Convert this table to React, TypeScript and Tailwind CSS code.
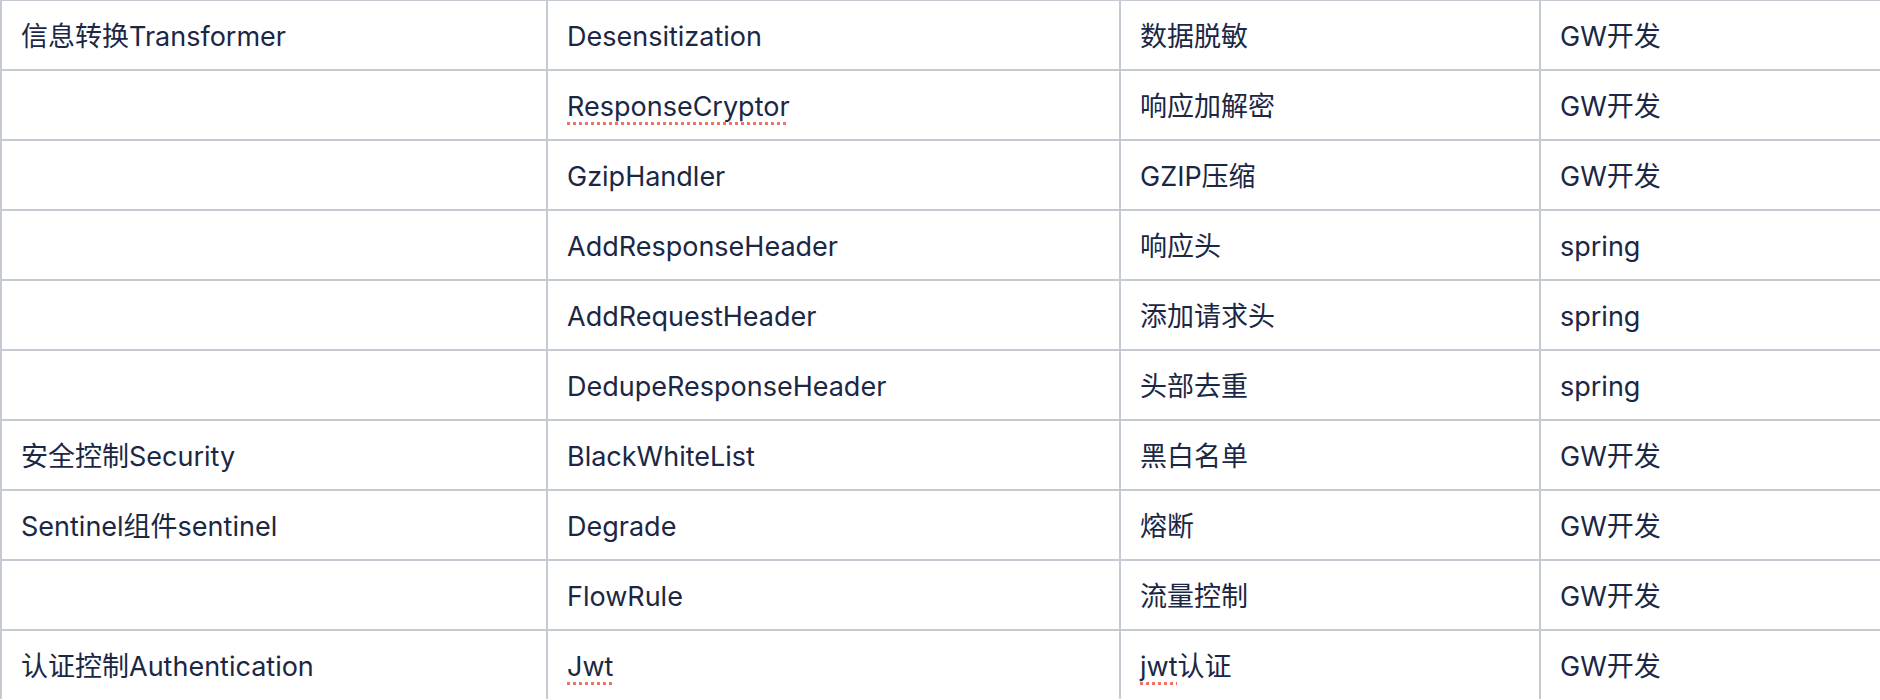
const rows: [string, string, string, string][] = [
  ["信息转换Transformer", "Desensitization", "数据脱敏", "GW开发"],
  ["", "ResponseCryptor", "响应加解密", "GW开发"],
  ["", "GzipHandler", "GZIP压缩", "GW开发"],
  ["", "AddResponseHeader", "响应头", "spring"],
  ["", "AddRequestHeader", "添加请求头", "spring"],
  ["", "DedupeResponseHeader", "头部去重", "spring"],
  ["安全控制Security", "BlackWhiteList", "黑白名单", "GW开发"],
  ["Sentinel组件sentinel", "Degrade", "熔断", "GW开发"],
  ["", "FlowRule", "流量控制", "GW开发"],
  ["认证控制Authentication", "Jwt", "jwt认证", "GW开发"],
];

// words the editor flags with its spell-check squiggle
const flagged = new Set(["ResponseCryptor", "Jwt", "jwt"]);

function Spell({ text }: { text: string }) {
  return (
    <span className="underline decoration-dotted decoration-[#f07264] decoration-[3px] underline-offset-[6px]">
      {text}
    </span>
  );
}

function CellText({ text }: { text: string }) {
  if (flagged.has(text)) return <Spell text={text} />;
  if (text.startsWith("jwt")) {
    return (
      <>
        <Spell text="jwt" />
        {text.slice(3)}
      </>
    );
  }
  return <>{text}</>;
}

export default function App() {
  return (
    <div className="h-[700px] w-[1880px] overflow-hidden bg-white">
      <div
        className="-mt-px grid w-[1959px] grid-cols-[546px_573px_420px_420px] text-[27px] text-[#1b2744]"
        style={{ fontFamily: 'Inter, "Noto Sans CJK SC", sans-serif' }}
      >
        {rows.map((r, i) =>
          r.map((c, j) => (
            <div
              key={`${i}-${j}`}
              className="flex h-[70px] items-center border-l-2 border-t-2 border-[#c5c9d2] pl-[19px] pt-1"
            >
              <CellText text={c} />
            </div>
          ))
        )}
      </div>
    </div>
  );
}
